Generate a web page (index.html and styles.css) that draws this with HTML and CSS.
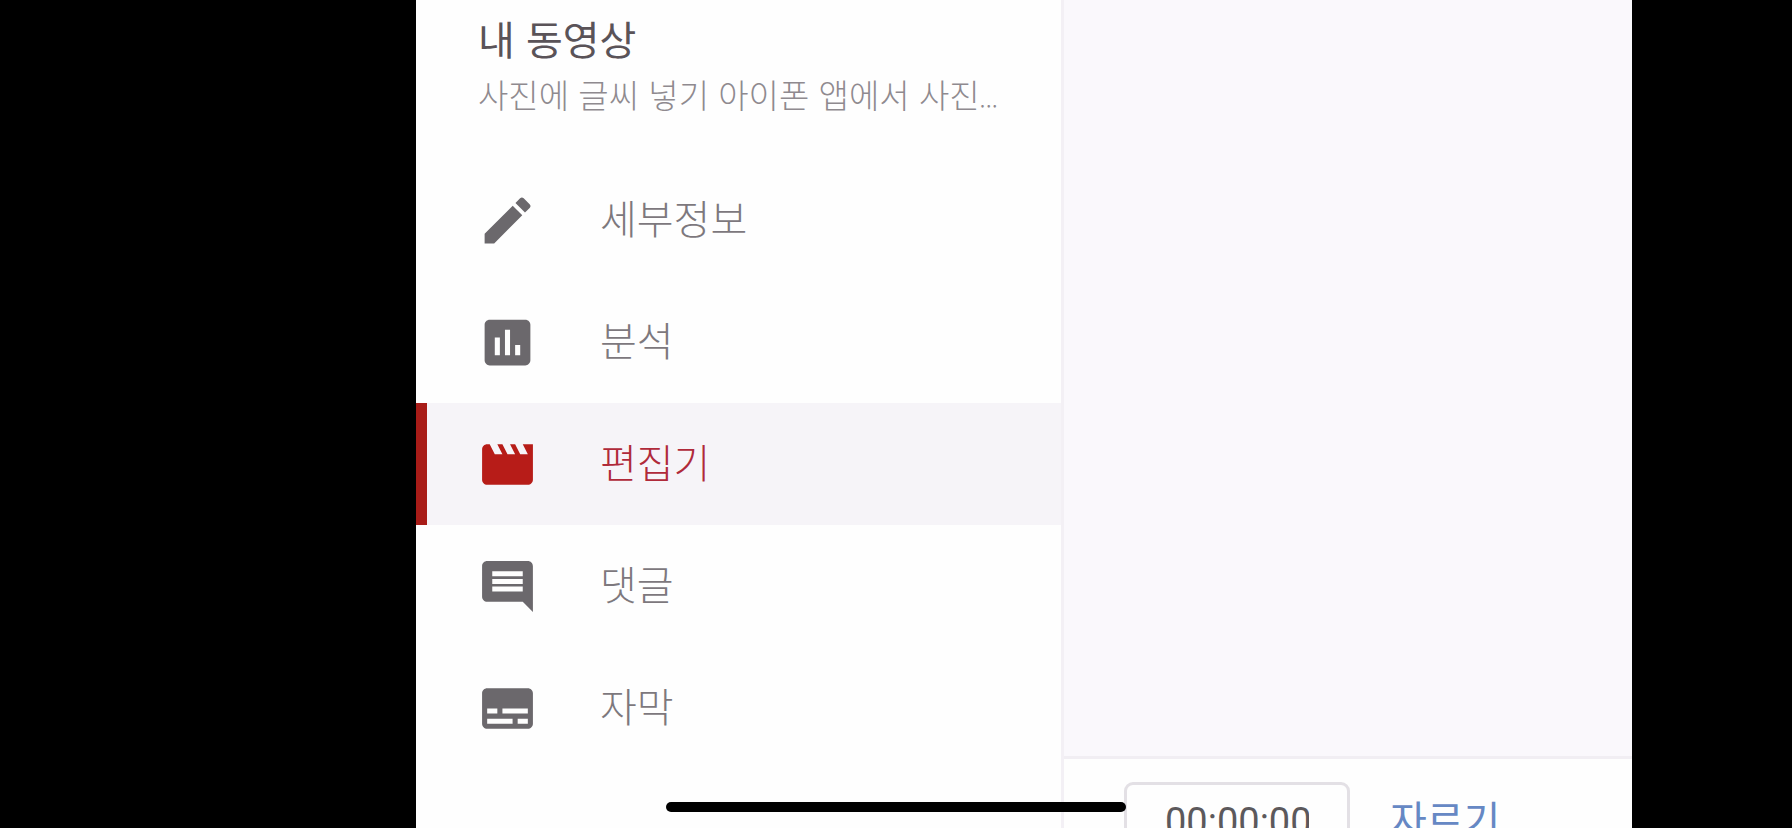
FILE: index.html
```html
<!DOCTYPE html>
<html lang="ko">
<head>
    <meta charset="UTF-8">
    <meta name="viewport" content="width=device-width, initial-scale=1.0">
    <title>내 동영상</title>
    <link rel="stylesheet" href="styles.css">
</head>
<body>
    <div class="container">
        <aside class="sidebar">
            <header class="video-info">
                <h1>내 동영상</h1>
                <p>사진에 글씨 넣기 아이폰 앱에서 사진<span class="dots">...</span></p>
            </header>
            <nav class="menu">
                <a href="#details">
                    <svg viewBox="0 0 24 24"><path d="M3 17.25V21h3.75L17.81 9.94l-3.75-3.75L3 17.25zM20.71 7.04a1 1 0 0 0 0-1.41l-2.34-2.34a1 1 0 0 0-1.41 0l-1.83 1.83 3.75 3.75 1.83-1.83z"/></svg>
                    <span>세부정보</span>
                </a>
                <a href="#analytics">
                    <svg viewBox="0 0 24 24"><path d="M19 3H5c-1.1 0-2 .9-2 2v14c0 1.1.9 2 2 2h14c1.1 0 2-.9 2-2V5c0-1.1-.9-2-2-2zM9 17H7v-7h2v7zm4 0h-2V7h2v10zm4 0h-2v-4h2v4z"/></svg>
                    <span>분석</span>
                </a>
                <a href="#editor" class="active">
                    <svg viewBox="0 0 24 24"><path d="M18 4l2 4h-3l-2-4h-2l2 4h-3l-2-4H8l2 4H7L5 4H4c-1.1 0-1.99.9-1.99 2L2 18c0 1.1.9 2 2 2h16c1.1 0 2-.9 2-2V4h-4z"/></svg>
                    <span>편집기</span>
                </a>
                <a href="#comments">
                    <svg viewBox="0 0 24 24"><path d="M21.99 4c0-1.1-.89-2-1.99-2H4c-1.1 0-2 .9-2 2v12c0 1.1.9 2 2 2h14l4 4-.01-18zM18 14H6v-2h12v2zm0-3H6V9h12v2zm0-3H6V6h12v2z"/></svg>
                    <span>댓글</span>
                </a>
                <a href="#subtitles">
                    <svg viewBox="0 0 24 24"><path d="M20 4H4c-1.1 0-2 .9-2 2v12c0 1.1.9 2 2 2h16c1.1 0 2-.9 2-2V6c0-1.1-.9-2-2-2zM4 12h4v2H4v-2zm10 6H4v-2h10v2zm6 0h-4v-2h4v2zm0-4H10v-2h10v2z"/></svg>
                    <span>자막</span>
                </a>
            </nav>
        </aside>
        <main class="editor">
            <div class="preview"></div>
            <div class="toolbar">
                <input type="text" class="time" value="00:00:00" aria-label="시간">
                <button type="button" class="trim">자르기</button>
            </div>
        </main>
    </div>
    <div class="home-bar"></div>
</body>
</html>
```
FILE: styles.css
```css
* {
    box-sizing: border-box;
}
body {
    font-family: "Noto Sans CJK KR", sans-serif;
    background: #000;
    margin: 0;
    height: 100vh;
    display: grid;
    grid-template-columns: 13fr 38fr 5fr;
    overflow: hidden;
}
.container {
    grid-column: 2;
    display: grid;
    grid-template-columns: 81fr 71fr;
    height: 100vh;
    background: #fefefe;
}
.sidebar {
    border-right: 3px solid #f3f0f5;
    min-width: 0;
}
.video-info {
    height: 159px;
    padding: 8px 60px 0 62px;
}
h1 {
    font-size: 40px;
    font-weight: 400;
    line-height: 60px;
    color: #5a5358;
    margin: 0;
}
.video-info p {
    font-size: 33px;
    font-weight: 300;
    line-height: 52px;
    color: #8f8a8f;
    margin: 0;
    white-space: nowrap;
}
.dots {
    font-size: 24px;
}
.menu a {
    display: flex;
    align-items: center;
    gap: 62px;
    height: 122px;
    padding: 0 61px;
    font-size: 40px;
    font-weight: 300;
    line-height: 60px;
    color: #7d787d;
    text-decoration: none;
}
.menu span {
    padding-bottom: 6px;
}
.menu svg {
    width: 61px;
    height: 61px;
    fill: #6b686c;
}
.menu a.active {
    background: #f6f4f8;
    border-left: 11px solid #a81c18;
    padding-left: 50px;
    color: #b02a3a;
}
.menu a.active svg {
    fill: #b71c18;
}
.editor {
    display: flex;
    flex-direction: column;
    min-width: 0;
}
.preview {
    flex: 1;
    background: #faf8fc;
}
.toolbar {
    display: flex;
    align-items: flex-start;
    gap: 40px;
    height: 72px;
    padding: 23px 60px 0;
    border-top: 3px solid #f1eef3;
    overflow: hidden;
}
.time {
    width: 226px;
    height: 80px;
    padding: 0 38px;
    border: 3px solid #e3e0e5;
    border-radius: 9px;
    background: #fefefe;
    font-family: Roboto, sans-serif;
    font-size: 38px;
    line-height: 44px;
    color: #5c595c;
}
.trim {
    padding: 6px 0;
    border: none;
    background: none;
    font-family: inherit;
    font-size: 40px;
    line-height: 60px;
    color: #6688c4;
}
/* phone home indicator */
.home-bar {
    position: fixed;
    left: 50%;
    bottom: 16px;
    width: 460px;
    height: 10px;
    margin-left: -230px;
    border-radius: 5px;
    background: #000;
}
```
